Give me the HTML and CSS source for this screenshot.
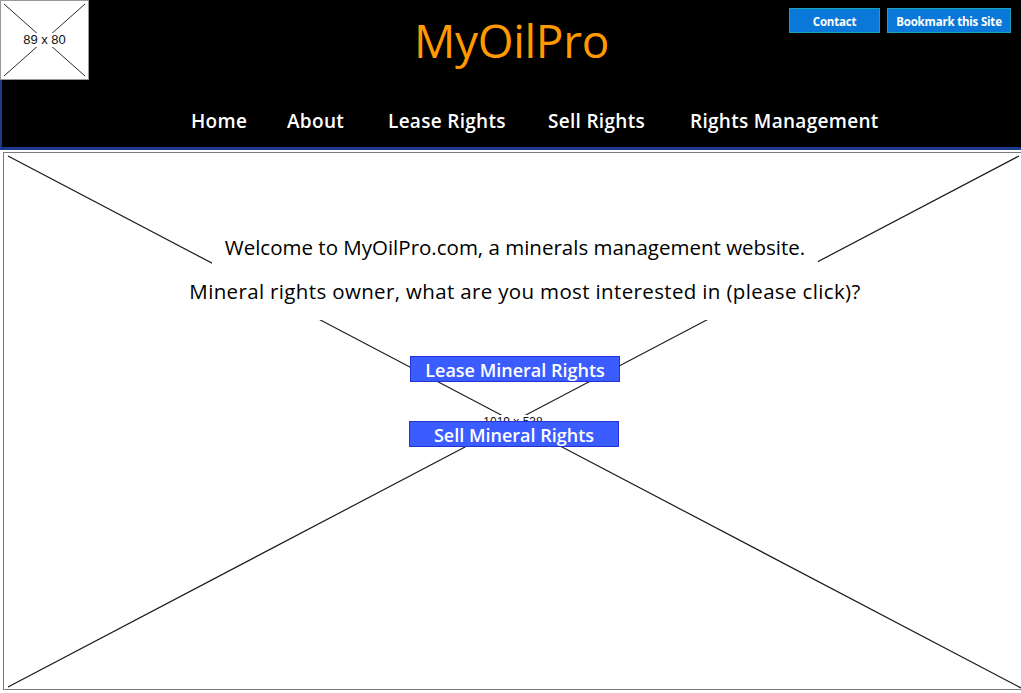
FILE: index.html
```html
<!DOCTYPE html>
<html lang="en">
<head>
<meta charset="utf-8">
<title>MyOilPro</title>
<link rel="stylesheet" href="styles.css">
</head>
<body>
<header class="top">
  <div class="top-row">
    <div class="logo-ph">
      <svg class="ph-lines" viewBox="0 0 89 80" preserveAspectRatio="none">
        <line x1="3" y1="3" x2="86" y2="77"/>
        <line x1="86" y1="3" x2="3" y2="77"/>
      </svg>
      <span class="ph-label">89 x 80</span>
    </div>
    <h1 class="brand">MyOilPro</h1>
    <div class="actions">
      <a class="btn-top btn-contact" href="#">Contact</a>
      <a class="btn-top btn-bookmark" href="#">Bookmark this Site</a>
    </div>
  </div>
  <nav class="nav">
    <a href="#">Home</a>
    <a href="#">About</a>
    <a href="#">Lease Rights</a>
    <a href="#">Sell Rights</a>
    <a href="#">Rights Management</a>
  </nav>
</header>
<main class="stage">
  <svg class="ph-lines big" viewBox="0 0 1017 536" preserveAspectRatio="none">
    <line x1="4" y1="3" x2="1016" y2="535"/>
    <line x1="1014" y1="3" x2="4" y2="534"/>
  </svg>
  <span class="stage-label">1019 x 538</span>
  <div class="stage-content">
    <p class="msg msg-welcome">Welcome to MyOilPro.com, a minerals management website.</p>
    <p class="msg msg-question">Mineral rights owner, what are you most interested in (please click)?</p>
    <a class="cta cta-lease" href="#">Lease Mineral Rights</a>
    <a class="cta cta-sell" href="#">Sell Mineral Rights</a>
  </div>
</main>
</body>
</html>
```
FILE: styles.css
```css
* { box-sizing: border-box; }
html, body { margin: 0; padding: 0; }
body {
  background: #fff;
  font-family: "Open Sans", "DejaVu Sans", sans-serif;
  width: 1021px;
  height: 693px;
  overflow: hidden;
}
a { text-decoration: none; }

.top {
  height: 150px;
  background: #000;
  border-left: 2px solid #1f3a8c;
  border-bottom: 3px solid #1f3a8c;
  display: flex;
  flex-direction: column;
}
.top-row {
  height: 90px;
  display: grid;
  grid-template-columns: 1fr auto 1fr;
  align-items: start;
}
.logo-ph {
  position: relative;
  width: 89px;
  height: 80px;
  margin-left: -2px;
  background: #fff;
  border: 1px solid #9a9a9a;
  display: flex;
  align-items: center;
  justify-content: center;
}
.ph-lines {
  position: absolute;
  inset: 0;
  width: 100%;
  height: 100%;
}
.ph-lines line { stroke: #222; stroke-width: 1; }
.ph-label {
  position: relative;
  background: #fff;
  font-family: "Liberation Sans", Arial, sans-serif;
  font-size: 13px;
  color: #111;
  padding: 0 3px;
  line-height: 14px;
}
.brand {
  margin: 17px 0 0;
  font-weight: 400;
  font-size: 46px;
  line-height: 46px;
  color: #ff9900;
  letter-spacing: -0.3px;
}
.actions {
  justify-self: end;
  display: flex;
  gap: 7px;
  padding: 8px 10px 0 0;
}
.btn-top {
  height: 25px;
  display: flex;
  align-items: center;
  justify-content: center;
  padding-top: 1px;
  background: #0a78d8;
  border: 1px solid #19a3b6;
  color: #fff;
  font-weight: 700;
  font-size: 11.5px;
  letter-spacing: -0.2px;
}
.btn-contact { width: 91px; }
.btn-bookmark { width: 124px; }

.nav {
  display: grid;
  grid-template-columns: 96px 101px 160px 142px auto;
  padding-left: 189px;
  margin-top: 18px;
}
.nav a {
  color: #fff;
  font-weight: 600;
  font-size: 19px;
  line-height: 26px;
  letter-spacing: 0.3px;
  white-space: nowrap;
}

.stage {
  position: relative;
  margin: 2px 0 0 3px;
  width: 1019px;
  height: 538px;
  border: 1px solid #7a7a7a;
  border-right: none;
}
.big line { stroke: #1a1a1a; stroke-width: 1.2; }
.stage-label {
  position: absolute;
  left: 50%;
  top: 262px;
  transform: translateX(-50%);
  background: #fff;
  padding: 0 6px;
  font-family: "Liberation Sans", Arial, sans-serif;
  font-size: 12px;
  line-height: 14px;
  color: #111;
}
.stage-content {
  position: relative;
  z-index: 1;
  display: flex;
  flex-direction: column;
  align-items: center;
  padding-top: 73px;
  padding-left: 4px;
}
.msg {
  margin: 0;
  background: #fff;
  color: #000;
  font-size: 20.5px;
  padding: 0 13px;
  white-space: nowrap;
}
.msg-welcome {
  height: 44px;
  line-height: 42px;
}
.msg-question {
  margin-left: 20px;
  height: 50px;
  line-height: 42px;
  padding-bottom: 8px;
  letter-spacing: 0.35px;
}
.cta {
  width: 210px;
  height: 26px;
  display: flex;
  align-items: center;
  justify-content: center;
  padding-top: 2px;
  background: #3b5cff;
  border: 1px solid #2233d6;
  color: #fff;
  font-weight: 600;
  font-size: 18px;
}
.cta-lease { margin-top: 36px; }
.cta-sell { margin-top: 39px; margin-left: -2px; }
```
